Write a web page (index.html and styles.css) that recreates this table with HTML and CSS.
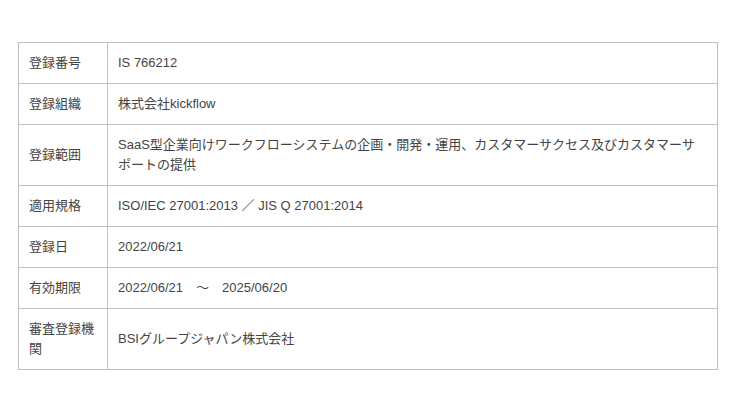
FILE: index.html
```html
<!DOCTYPE html>
<html lang="ja">
<head>
<meta charset="utf-8">
<link rel="stylesheet" href="styles.css">
</head>
<body>
<div class="wrap">
<table class="info">
<tbody>
<tr><th>登録番号</th><td>IS 766212</td></tr>
<tr><th>登録組織</th><td>株式会社kickflow</td></tr>
<tr><th>登録範囲</th><td>SaaS型企業向けワークフローシステムの企画・開発・運用、カスタマーサクセス及びカスタマーサポートの提供</td></tr>
<tr><th>適用規格</th><td>ISO/IEC 27001:2013 ／ JIS Q 27001:2014</td></tr>
<tr><th>登録日</th><td>2022/06/21</td></tr>
<tr><th>有効期限</th><td>2022/06/21　～　2025/06/20</td></tr>
<tr><th>審査登録機関</th><td>BSIグループジャパン株式会社</td></tr>
</tbody>
</table>
</div>
</body>
</html>
```
FILE: styles.css
```css
html, body {
  margin: 0;
  padding: 0;
  background: #fff;
}
.wrap {
  padding: 42px 22px 0 18px;
}
.info {
  width: 700px;
  border-collapse: collapse;
  font-family: "Liberation Sans", "Noto Sans CJK JP", sans-serif;
  font-size: 13px;
  line-height: 20px;
  color: #444;
}
.info th, .info td {
  border: 1px solid #c0c0c0;
  padding: 10px 10px;
  text-align: left;
  font-weight: normal;
  vertical-align: middle;
}
.info th {
  width: 68px;
}
```
